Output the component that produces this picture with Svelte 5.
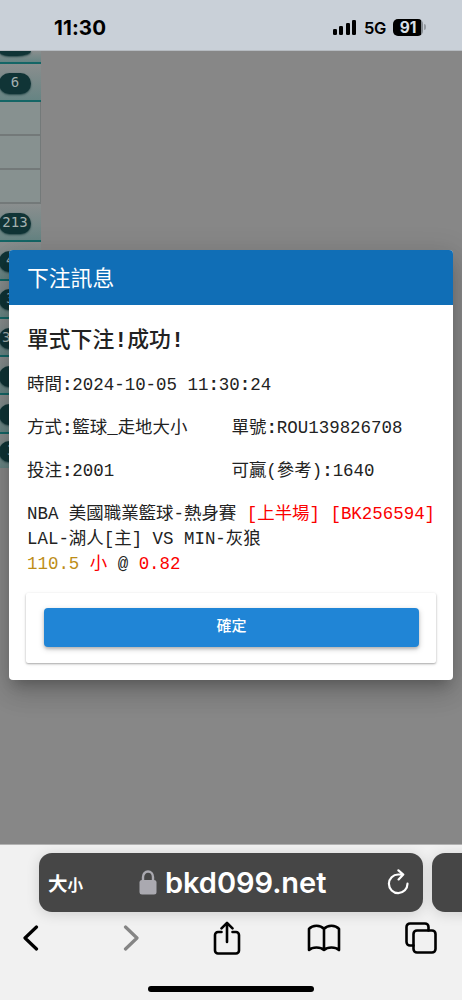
<script lang="ts">
    interface Row {
        label: string;
        indent: number;
    }

    // Badge rows below the empty cells, mostly covered by the dialog
    const rows: Row[] = [
        { label: '4', indent: 7 },
        { label: '3', indent: 7 },
        { label: '3', indent: 3 },
        { label: '', indent: 0 },
        { label: '', indent: 0 },
        { label: '3', indent: 8 }
    ];

    const bars = [6, 8.5, 11.5, 15];
</script>

<div class="phone">
    <header class="status">
        <span class="time">11:30</span>
        <div class="indicators">
            <div class="signal">
                {#each bars as height}
                    <i style="height: {height}px"></i>
                {/each}
            </div>
            <span class="network">5G</span>
            <div class="battery"><span>91</span></div>
            <i class="cap"></i>
        </div>
    </header>

    <main>
        <aside>
            <div class="row first"><span class="badge"></span></div>
            <div class="row"><span class="badge center">6</span></div>
            <div class="cell"></div>
            <div class="cell"></div>
            <div class="cell"></div>
            <div class="row"><span class="badge center">213</span></div>
            {#each rows as row}
                <div class="row">
                    <span class="badge" style="padding-left: {row.indent}px">{row.label}</span>
                </div>
            {/each}
        </aside>

        <section class="dialog">
            <h1>下注訊息</h1>
            <div class="body">
                <h2>單式下注<b>!</b>成功<b>!</b></h2>
                <p>時間<b>:</b>2024-10-05 11<b>:</b>30<b>:</b>24</p>
                <div class="pair">
                    <p>方式<b>:</b>籃球_走地大小</p>
                    <p>單號<b>:</b>ROU139826708</p>
                </div>
                <div class="pair">
                    <p>投注<b>:</b>2001</p>
                    <p>可贏(參考)<b>:</b>1640</p>
                </div>
                <div class="bet">
                    <div>NBA 美國職業籃球-熱身賽 <span class="red">[上半場] [BK256594]</span></div>
                    <div>LAL-湖人[主] VS MIN-灰狼</div>
                    <div><span class="gold">110.5</span> <span class="red">小</span> @ <span class="red">0.82</span></div>
                </div>
                <div class="actions">
                    <button>確定</button>
                </div>
            </div>
        </section>
    </main>

    <footer>
        <div class="tabs">
            <div class="address">
                <span class="size">大<small>小</small></span>
                <div class="site">
                    <svg width="18" height="25" viewBox="0 0 18 25">
                        <path d="M4 12V7a5 5.5 0 0 1 10 0v5" fill="none" stroke="#aaa9b0" stroke-width="2.4" />
                        <rect x=".5" y="10" width="17" height="14.5" rx="2.5" fill="#aaa9b0" />
                    </svg>
                    <span class="host">bkd099.net</span>
                </div>
                <svg width="24" height="28" viewBox="0 0 24 28" fill="none" stroke="#fff" stroke-width="2.2" stroke-linecap="round" stroke-linejoin="round">
                    <path d="M21.5 14.7a9.3 9.3 0 1 1-9.3-9.2h5M12.4 1.3l4.9 4.2-4.7 4.9" />
                </svg>
            </div>
            <div class="next-tab"></div>
        </div>
        <nav>
            <svg width="16" height="26" viewBox="0 0 16 26">
                <path d="M13.5 2 2 13l11.5 11" stroke-width="3.2" />
            </svg>
            <svg width="16" height="26" viewBox="0 0 16 26" class="dim">
                <path d="m2.500 2 11.500 11-11.500 11" stroke-width="3.200" />
            </svg>
            <svg width="28" height="34" viewBox="0 0 28 34">
                <path d="M8.500 11H5a3 3 0 0 0-3 3v15.500a3 3 0 0 0 3 3h18a3 3 0 0 0 3-3V14a3 3 0 0 0-3-3h-3.500M14 21V2M8.500 7.300 14 1.800l5.500 5.500" />
            </svg>
            <svg width="34" height="28" viewBox="0 0 34 28">
                <path d="M17 4.800C13.500.7 5.500.7 2 4.800V26c3.500-3.300 11.500-3.300 15 0 3.500-3.300 11.500-3.300 15 0V4.800C28.500.7 20.500.7 17 4.800ZM17 5v21" />
            </svg>
            <svg width="32" height="32" viewBox="0 0 32 32">
                <path d="M8.500 23.500H5A3.500 3.500 0 0 1 1.500 20V5A3.500 3.500 0 0 1 5 1.500h15A3.500 3.500 0 0 1 23.500 5v3.500" />
                <rect x="8.500" y="8.500" width="22" height="22" rx="3.500" />
            </svg>
        </nav>
        <div class="home"></div>
    </footer>
</div>

<style>
    :global(body) {
        margin: 0;
    }

    .phone {
        display: flex;
        flex-direction: column;
        width: 462px;
        height: 1000px;
        overflow: hidden;
        font-family: Inter, 'Noto Sans CJK TC', sans-serif;
    }

    .status {
        display: flex;
        justify-content: space-between;
        box-sizing: border-box;
        height: 51px;
        padding: 17px 36px 0 54px;
        background: #c9d0d8;
        border-bottom: 1px solid #b6bbc1;
    }

    .time {
        font-size: 20.5px;
        font-weight: 700;
        line-height: 22px;
        letter-spacing: 0.1px;
    }

    .indicators {
        display: flex;
        align-items: center;
        height: 20px;
        margin-top: 1px;
    }

    .signal {
        display: flex;
        align-items: flex-end;
        gap: 2.5px;
        height: 15px;
        margin: -2px 8px 0 0;
    }

    .signal i {
        width: 4px;
        border-radius: 1.3px;
        background: #000;
    }

    .network {
        width: 29px;
        font-size: 16.5px;
        font-weight: 600;
        letter-spacing: -0.3px;
    }

    .battery {
        width: 30px;
        height: 17px;
        margin-top: -2px;
        border-radius: 5px;
        background: linear-gradient(90deg, #000 28px, #858b91 28px);
        color: #d9e0e8;
        font-size: 15.5px;
        font-weight: 700;
        line-height: 17px;
        text-align: center;
    }

    .cap {
        width: 2px;
        height: 6px;
        margin: -2px 0 0 1px;
        border-radius: 0 3px 3px 0;
        background: #959ba2;
    }

    main {
        position: relative;
        height: 793px;
        overflow: hidden;
        background: #878787;
    }

    aside {
        display: flex;
        flex-direction: column;
        width: 41px;
    }

    .row {
        display: flex;
        flex: none;
        align-items: center;
        box-sizing: border-box;
        height: 38.3px;
        padding-top: 2px;
        border-bottom: 2px solid #146666;
        background: linear-gradient(#8a8e8e, #668483);
    }

    .row:last-child {
        border-bottom: 0;
        height: 34px;
    }

    .row.first {
        align-items: flex-start;
        height: 13px;
        padding: 0;
    }

    .row.first .badge {
        height: 5px;
        border-radius: 0 0 14px 10px / 0 0 5px 5px;
    }

    .badge {
        box-sizing: border-box;
        width: 32px;
        height: 21px;
        margin-left: -1px;
        border-radius: 11px;
        background: #103436;
        box-shadow: 0 1px 2px #26494a;
        color: #a4b0af;
        font: 14px/18px 'DejaVu Sans Mono', monospace;
    }

    .badge.center {
        text-align: center;
    }

    .cell {
        box-sizing: border-box;
        flex: none;
        height: 33.9px;
        border-right: 1px solid #737979;
        border-bottom: 2px solid #737979;
        background: #879190;
    }

    .dialog {
        position: absolute;
        top: 199px;
        left: 9px;
        width: 444px;
        height: 430px;
        overflow: hidden;
        border-radius: 4px;
        background: #fff;
        box-shadow: 0 9px 12px -5px rgba(0, 0, 0, 0.2), 0 14px 26px 1px rgba(0, 0, 0, 0.12), 0 5px 28px 4px rgba(0, 0, 0, 0.1);
        color: #222;
        font-family: 'Liberation Mono', 'Noto Sans CJK TC', monospace;
        font-size: 17.45px;
    }

    .dialog b {
        font-weight: 700;
    }

    h1 {
        box-sizing: border-box;
        height: 55px;
        margin: 0;
        padding: 3px 0 0 18px;
        background: #106eb6;
        color: #fff;
        font-size: 21.8px;
        font-weight: 400;
        line-height: 56px;
    }

    .body {
        padding: 0 17px 0 18px;
    }

    h2 {
        margin: 22px 0 15px;
        font-size: 21.8px;
        font-weight: 500;
        line-height: 30px;
    }

    p {
        margin: 0;
        line-height: 27px;
    }

    .pair {
        display: grid;
        grid-template-columns: 204.5px 1fr;
        margin-top: 16px;
    }

    .bet {
        margin-top: 17px;
        white-space: nowrap;
    }

    .bet div {
        height: 25px;
        line-height: 25px;
    }

    .red {
        color: #fb0000;
    }

    .gold {
        color: #bd8d17;
    }

    .actions {
        box-sizing: border-box;
        height: 70px;
        margin: 16px 0 0 -1px;
        padding: 15px 17px 15px 18px;
        border-radius: 2px;
        box-shadow: 0 1px 2px rgba(0, 0, 0, 0.3), 0 1px 4px rgba(0, 0, 0, 0.08);
    }

    button {
        display: block;
        width: 100%;
        height: 39px;
        padding: 0 0 6px;
        border: 0;
        border-radius: 4px;
        background: #2085d6;
        box-shadow: 0 2px 3px rgba(0, 0, 0, 0.18), 0 2px 6px rgba(0, 0, 0, 0.18);
        color: #fff;
        font: 500 15px 'Noto Sans CJK TC', sans-serif;
    }

    footer {
        height: 156px;
        background: #f1f1f1;
        box-shadow: inset 0 1px #b3b3b3;
    }

    .tabs {
        display: flex;
        gap: 9px;
        padding: 9px 0 0 39px;
    }

    .address,
    .next-tab {
        flex: none;
        box-sizing: border-box;
        height: 59px;
        border-radius: 13px;
        background: #464646;
        box-shadow: 0 2px 14px rgba(0, 0, 0, 0.14);
        color: #fff;
    }

    .address {
        display: flex;
        align-items: center;
        justify-content: space-between;
        width: 384px;
        padding: 0 13px 0 9px;
    }

    .next-tab {
        width: 60px;
    }

    .size {
        width: 91px;
        font: 700 19.5px 'Noto Sans CJK TC', sans-serif;
    }

    .size small {
        font-size: 15.5px;
    }

    .site {
        display: flex;
        flex: 1;
        align-items: center;
        gap: 8px;
    }

    .host {
        font-size: 29px;
        font-weight: 600;
        letter-spacing: -0.05px;
    }

    nav {
        display: grid;
        grid-template-columns: 100px 96px 97px 97px 72px;
        align-items: center;
        height: 36px;
        margin-top: 8px;
    }

    nav svg {
        fill: none;
        stroke: #000;
        stroke-width: 2.6;
        stroke-linecap: round;
        stroke-linejoin: round;
    }

    nav svg:nth-child(1),
    nav svg:nth-child(2) {
        margin-left: 23px;
    }

    nav svg:nth-child(3) {
        margin-left: 17px;
    }

    nav svg:nth-child(4) {
        margin-left: 14px;
    }

    nav svg:nth-child(5) {
        margin-left: 15px;
    }

    nav .dim {
        stroke: #858585;
    }

    .home {
        width: 166px;
        height: 6px;
        margin: 30px auto 0;
        border-radius: 3px;
        background: #000;
    }
</style>
